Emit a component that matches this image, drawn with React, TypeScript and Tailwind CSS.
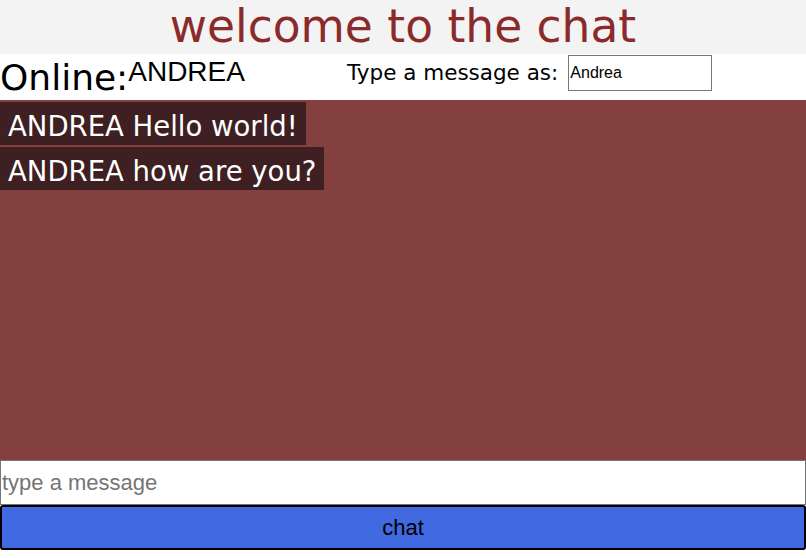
import React from "react"

const messages = [
  { user: "ANDREA", text: "Hello world!" },
  { user: "ANDREA", text: "how are you?" },
]

export default function App() {
  return (
    <div className="w-[806px] h-[558px] bg-white font-['DejaVu_Sans',sans-serif] overflow-hidden">
      {/* Header */}
      <div className="h-[54px] bg-[#f3f3f3] flex items-center justify-center">
        <h1 className="text-[45.5px] leading-none text-[#8b2a2a] -mt-[1px]">welcome to the chat</h1>
      </div>

      {/* Online row */}
      <div className="h-[46px] flex items-start">
        <div className="w-[347px] flex items-start">
          <span className="text-[36px] leading-[46px] text-black mt-[1px]">Online:</span>
          <span className="text-[28px] leading-none mt-[4px] font-['Liberation_Sans',sans-serif] text-black">ANDREA</span>
        </div>
        <label className="flex items-center text-[21.5px] text-black">
          <span className="mt-[2px]">Type a message as:</span>
          <input
            defaultValue="Andrea"
            className="ml-[10px] mt-[1px] w-[144px] h-[36px] border border-[#767676] px-[1px] text-[16px] font-['Liberation_Sans',sans-serif] outline-none"
          />
        </label>
      </div>

      {/* Messages */}
      <div className="h-[360px] bg-[#843f3f] flex flex-col items-start gap-[2px] pt-[2px]">
        {messages.map((m, i) => (
          <div key={i} className="h-[43px] bg-[#3e1f22] px-[8px] pt-[7px] flex items-center text-[27.5px] text-white whitespace-nowrap">
            {m.user} {m.text}
          </div>
        ))}
      </div>

      {/* Composer */}
      <input
        placeholder="type a message"
        className="block w-full h-[45px] border border-[#767676] px-[1px] text-[22px] font-['Liberation_Sans',sans-serif] placeholder:text-[#757575] outline-none"
      />
      <button className="block w-full h-[45px] bg-[#4169e1] border-2 border-black rounded-[3px] text-[22px] font-['Liberation_Sans',sans-serif] text-black">
        chat
      </button>
    </div>
  )
}
